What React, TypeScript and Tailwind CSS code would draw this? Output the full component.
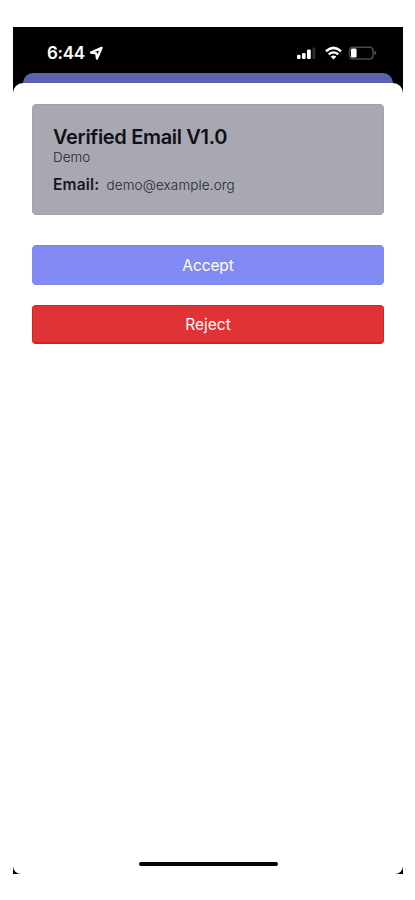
function StatusIcons() {
  return (
    <svg className="block h-5 w-[82px]" viewBox="0 0 82 20" fill="none">
      <rect x="1" y="11.8" width="3.6" height="4.2" rx="1.2" fill="#fff" />
      <rect x="6" y="10" width="3.6" height="6" rx="1.2" fill="#fff" />
      <rect x="11" y="6.6" width="3.8" height="9.4" rx="1.2" fill="#fff" />
      <rect x="16.4" y="4.5" width="3" height="11.5" rx="1" fill="#2c2c2c" />
      <path d="M30 8.2Q37.5 1.6 45 8.2" stroke="#fff" strokeWidth="2.5" />
      <path d="M32.7 11.4Q37.5 7.2 42.3 11.4" stroke="#fff" strokeWidth="2.1" />
      <path d="M34.6 13.6Q37.5 11.4 40.4 13.6L37.5 16.4Z" fill="#fff" />
      <rect x="53.6" y="4.2" width="23.4" height="11.8" rx="3.2" stroke="#484848" strokeWidth="1.6" />
      <rect x="55" y="5.6" width="5.6" height="9" rx="1.3" fill="#fff" />
      <path d="M78.4 7.8Q80.4 8.3 80.4 10T78.4 12Z" fill="#555" />
    </svg>
  );
}

export default function App() {
  return (
    <div className="flex h-[900px] w-[415px] flex-col bg-white pt-[27px] pr-3 pl-[13px] font-['Inter',sans-serif]">
      <main className="flex h-[847px] w-[390px] flex-col bg-black">
        <header className="flex h-[46px] shrink-0 items-center justify-between pt-1.5 pr-[25px] pl-[34px]">
          <div className="flex items-center gap-1 text-white">
            <span className="text-[17px] leading-5 font-semibold tracking-[-0.3px]">6:44</span>
            <svg className="h-[15px] w-[15px]" viewBox="0 0 15 15" fill="none">
              <path d="M12.6 1.8L2 6.6L7.2 7.4L8 12.6Z" stroke="#fff" strokeWidth="2.3" strokeLinejoin="round" />
            </svg>
          </div>
          <StatusIcons />
        </header>
        <div className="mx-2.5 h-2.5 shrink-0 rounded-t-[10px] bg-[#5c61b1]" />
        <section className="flex flex-1 flex-col rounded-t-[10px] rounded-b-[8px] bg-white px-[19px] pt-[21px]">
          <div className="h-[111px] w-[352px] shrink-0 rounded-[4px] border border-[#a0a1aa] bg-[#a8a8b2] px-5 pt-5">
            <h1 className="text-[20px] leading-6 font-semibold tracking-[-0.32px] whitespace-nowrap text-[#101116]">Verified Email V1.0</h1>
            <p className="text-[13.5px] leading-4 font-light text-[#25262d]">Demo</p>
            <div className="mt-2.5 flex items-center gap-[7px] leading-5 whitespace-nowrap">
              <span className="text-[15.5px] font-semibold tracking-[0.2px] text-[#17181e]">Email:</span>
              <span className="text-[13.5px] font-light tracking-[0.12px] text-[#25262d]">demo@example.org</span>
            </div>
          </div>
          <button className="mt-[30px] h-10 w-[352px] shrink-0 rounded-[4px] border border-[#7f87ed] bg-[#828bf3] pt-0.5 text-[15.5px] tracking-[-0.1px] text-white">Accept</button>
          <button className="mt-5 h-[39px] w-[352px] shrink-0 rounded-[4px] border border-b-2 border-[#d82025] bg-[#df3335] pt-0.5 text-[15.5px] text-white">Reject</button>
          <div className="mt-auto mb-2 ml-[107px] h-1 w-[139px] rounded-full bg-black" />
        </section>
      </main>
    </div>
  );
}
